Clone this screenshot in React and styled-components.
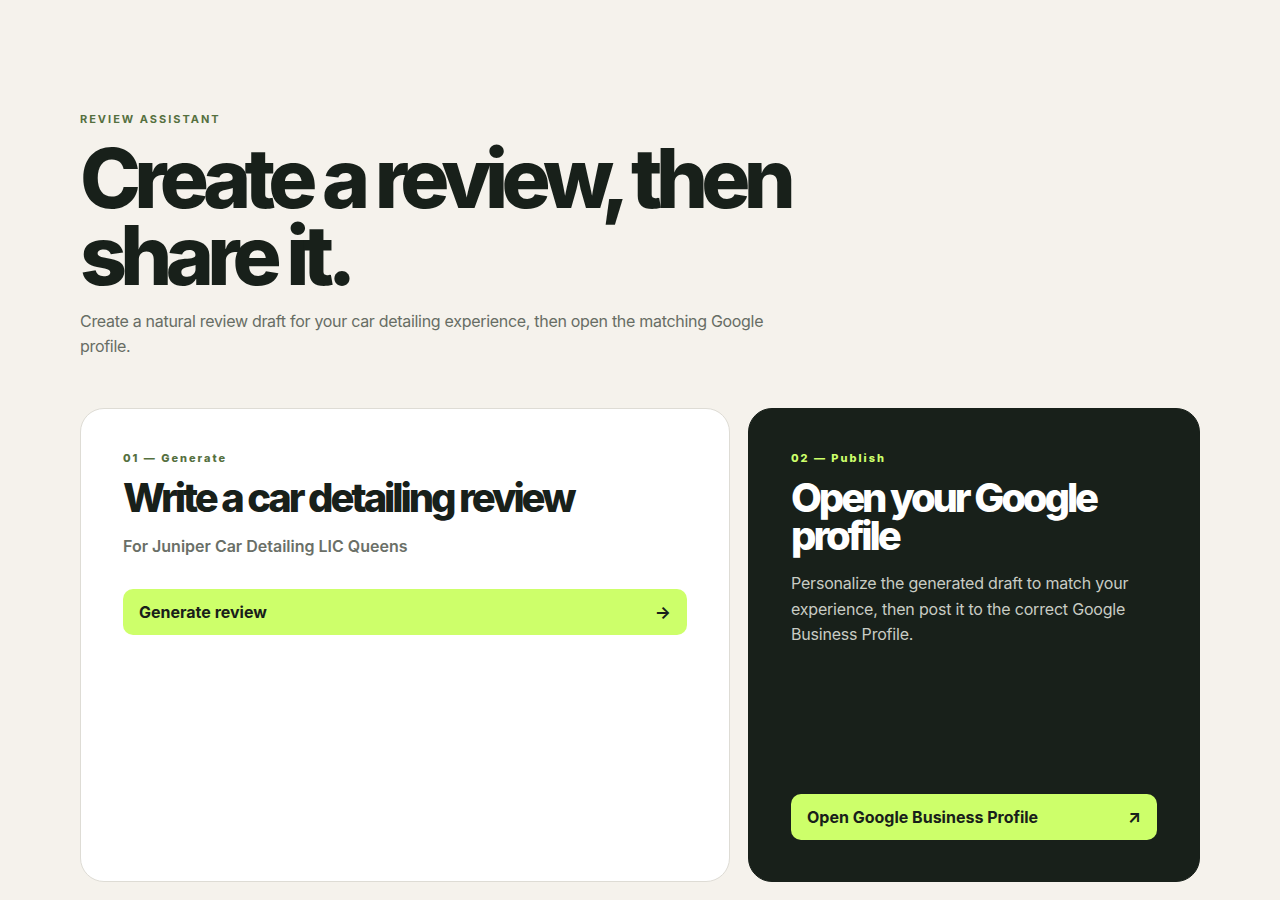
import React from "react";
import styled, { createGlobalStyle } from "styled-components";

const Global = createGlobalStyle`
  html, body { margin: 0; padding: 0; background: #f5f2ec; }
  body { font-family: Inter, "Noto Sans", sans-serif; -webkit-font-smoothing: antialiased; }
  * { box-sizing: border-box; }
`;

const Page = styled.main`
  max-width: 1120px;
  margin: 0 auto;
  padding: 112px 0 0;
`;

const Hero = styled.header`
  display: flex;
  flex-direction: column;
`;

const Eyebrow = styled.div`
  font-size: 11px;
  font-weight: 700;
  letter-spacing: 0.18em;
  text-transform: uppercase;
  color: #55703f;
  line-height: 14px;
`;

const Title = styled.h1`
  margin: 14px 0 0;
  font-size: 82px;
  font-weight: 800;
  letter-spacing: -0.082em;
  line-height: 77px;
  color: #18201a;
  max-width: 760px;
`;

const Lead = styled.p`
  margin: 15px 0 0;
  font-size: 16px;
  line-height: 25px;
  letter-spacing: -0.3px;
  color: #676d64;
  max-width: 700px;
`;

const Grid = styled.section`
  display: grid;
  grid-template-columns: minmax(0, 650fr) minmax(0, 452fr);
  gap: 18px;
  margin-top: 49px;
`;

const Card = styled.article`
  display: flex;
  flex-direction: column;
  min-height: 474px;
  padding: 42px 42px 41px;
  border-radius: 24px;
  background: ${p => (p.$dark ? "#18201a" : "#ffffff")};
  border: 1px solid ${p => (p.$dark ? "#18201a" : "#dedcd5")};
`;

const Step = styled.div`
  font-size: 11px;
  font-weight: 800;
  letter-spacing: 0.18em;
  line-height: 14px;
  color: ${p => (p.$dark ? "#cdff6a" : "#55703f")};
`;

const CardTitle = styled.h2`
  margin: 14px 0 0;
  font-size: 40px;
  font-weight: 800;
  letter-spacing: -0.078em;
  line-height: 38px;
  color: ${p => (p.$dark ? "#ffffff" : "#18201a")};
`;

const Sub = styled.p`
  margin: 18px 0 0;
  font-size: 16px;
  font-weight: 600;
  line-height: 22px;
  color: #6a6f67;
`;

const Desc = styled.p`
  margin: 16px 0 0;
  font-size: 16px;
  line-height: 25.5px;
  letter-spacing: -0.2px;
  color: #c8ccc4;
`;

const Spacer = styled.div`
  flex: 1;
`;

const Button = styled.button`
  display: flex;
  align-items: center;
  justify-content: space-between;
  width: 100%;
  height: 46px;
  margin-top: ${p => p.$mt || "0"};
  padding: 0 16px;
  border: none;
  border-radius: 10px;
  background: #cdff6a;
  color: #18201a;
  font-family: Inter, "Noto Sans", sans-serif;
  font-size: 16px;
  font-weight: 700;
  cursor: pointer;
`;

const Glyph = styled.span`
  font-size: 17px;
  font-weight: 700;
  line-height: 1;
`;

export default function App() {
  return (
    <>
      <Global />
      <Page>
        <Hero>
          <Eyebrow>Review Assistant</Eyebrow>
          <Title>Create a review, then share it.</Title>
          <Lead>
            Create a natural review draft for your car detailing experience, then open the matching Google profile.
          </Lead>
        </Hero>
        <Grid>
          <Card>
            <Step>01 — Generate</Step>
            <CardTitle>Write a car detailing review</CardTitle>
            <Sub>For Juniper Car Detailing LIC Queens</Sub>
            <Button $mt="32px">
              <span>Generate review</span>
              <Glyph>→</Glyph>
            </Button>
          </Card>
          <Card $dark>
            <Step $dark>02 — Publish</Step>
            <CardTitle $dark>Open your Google profile</CardTitle>
            <Desc>
              Personalize the generated draft to match your experience, then post it to the correct Google Business Profile.
            </Desc>
            <Spacer />
            <Button>
              <span>Open Google Business Profile</span>
              <Glyph>↗</Glyph>
            </Button>
          </Card>
        </Grid>
      </Page>
    </>
  );
}
